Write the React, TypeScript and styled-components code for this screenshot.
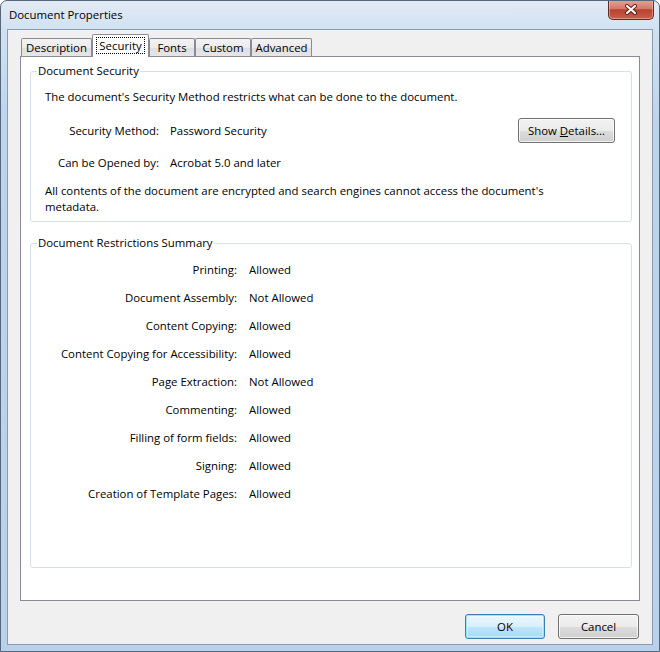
import { Fragment } from "react";
import styled, { createGlobalStyle } from "styled-components";

const GlobalStyle = createGlobalStyle`
  html, body {
    margin: 0;
    padding: 0;
    background: #ffffff;
  }
  body {
    font-family: "Open Sans", "Noto Sans", "Liberation Sans", sans-serif;
    font-size: 11.4px;
    color: #000000;
  }
  * {
    box-sizing: border-box;
  }
`;

const Window = styled.div`
  width: 660px;
  height: 652px;
  display: flex;
  flex-direction: column;
  border: 1px solid #56677b;
  border-radius: 7px 7px 0 0;
  padding: 0 6px 6px;
  overflow: hidden;
  background: linear-gradient(to bottom, #e2ebf5 0px, #d2e1f1 28px, #bdd4ed 120px, #b9d1ea 100%);
`;

const TitleBar = styled.div`
  height: 28px;
  display: flex;
  align-items: center;
  justify-content: space-between;
  padding-left: 2px;
`;

const Title = styled.span`
  line-height: 16px;
`;

const CloseButton = styled.div`
  align-self: flex-start;
  width: 46px;
  height: 20px;
  margin-top: -1px;
  margin-right: -1px;
  display: flex;
  align-items: center;
  justify-content: center;
  border: 1px solid #5e2a22;
  border-top: none;
  border-radius: 0 0 5px 5px;
  background: linear-gradient(to bottom, #e3a59b 0%, #d27a6a 45%, #b9412f 52%, #c9604c 100%);
  box-shadow: inset 0 0 0 1px rgba(255, 210, 200, 0.45);
`;

const Client = styled.div`
  flex: 1;
  display: flex;
  flex-direction: column;
  background: #f0f0f0;
  border: 1px solid #8a9bb0;
  padding: 4px 12px 5px 12px;
`;

const TabStrip = styled.div`
  height: 23px;
  margin-bottom: -1px;
  padding-left: 1px;
  display: flex;
  align-items: flex-end;
  position: relative;
  z-index: 1;
`;

const Tab = styled.div<{ $selected?: boolean; $w: number }>`
  width: ${(p) => p.$w}px;
  height: ${(p) => (p.$selected ? 23 : 18)}px;
  margin-bottom: ${(p) => (p.$selected ? 0 : 1)}px;
  display: flex;
  align-items: center;
  justify-content: center;
  border: 1px solid #898c95;
  border-bottom: none;
  border-radius: 2px 2px 0 0;
  background: ${(p) =>
    p.$selected
      ? "#ffffff"
      : "linear-gradient(to bottom, #f3f3f3 0%, #ebebeb 50%, #dedede 51%, #e6e6e6 100%)"};
  line-height: 16px;
  padding-top: ${(p) => (p.$selected ? 0 : 1)}px;
`;

const FocusLabel = styled.span`
  border: 1px dotted #000000;
  padding: 0 2px;
  line-height: 15px;
  margin-top: -2px;
`;

const Panel = styled.div`
  flex: 1;
  display: flex;
  flex-direction: column;
  gap: 13px;
  background: #ffffff;
  border: 1px solid #898c95;
  padding: 6px 7px 32px 9px;
`;

const Group = styled.fieldset<{ $grow?: boolean }>`
  margin: 0;
  padding: 0 6px;
  min-width: 0;
  border: 1px solid #d5dfe5;
  border-radius: 3px;
  flex: ${(p) => (p.$grow ? "1" : "none")};
`;

const Legend = styled.legend`
  padding: 0 1px;
  line-height: 16px;
`;

const SecurityBody = styled.div`
  display: flex;
  flex-direction: column;
  gap: 12px;
  padding: 10px 8px 6px;
  line-height: 16px;
`;

const InfoRow = styled.div<{ $first?: boolean }>`
  display: grid;
  grid-template-columns: 114px 1fr auto;
  column-gap: 11px;
  align-items: center;
  min-height: 16px;
  margin-top: ${(p) => (p.$first ? 1 : 0)}px;
`;

const InfoLabel = styled.span`
  text-align: right;
  white-space: nowrap;
`;

const Note = styled.p`
  margin: 0;
`;

const RestrictionsBody = styled.div`
  display: grid;
  grid-template-columns: 192px auto;
  column-gap: 12px;
  row-gap: 12px;
  justify-content: start;
  padding: 11px 8px 0;
  line-height: 16px;
`;

const RuleLabel = styled.span`
  text-align: right;
  white-space: nowrap;
`;

const RuleValue = styled.span`
  white-space: nowrap;
`;

const Button = styled.button<{ $default?: boolean; $w: number }>`
  width: ${(p) => p.$w}px;
  height: 25px;
  padding: 0;
  font: inherit;
  color: #000000;
  border: 1px solid ${(p) => (p.$default ? "#3c7fb1" : "#707070")};
  border-radius: 3px;
  background: ${(p) =>
    p.$default
      ? "linear-gradient(to bottom, #eaf6fd 0%, #d9f0fc 50%, #bee6fd 51%, #a7d9f5 100%)"
      : "linear-gradient(to bottom, #f2f2f2 0%, #ebebeb 50%, #dddddd 51%, #cfcfcf 100%)"};
  box-shadow: ${(p) =>
    p.$default
      ? "inset 0 0 0 1px #98e4f9, inset 0 0 0 2px rgba(255,255,255,0.35)"
      : "inset 0 0 0 1px rgba(255,255,255,0.75)"};
  line-height: 16px;
`;

const DetailsButton = styled(Button)`
  margin-right: 2px;
`;

const ButtonRow = styled.div`
  display: flex;
  justify-content: flex-end;
  gap: 13px;
  margin-top: 13px;
  padding-right: 1px;
`;

const tabs = [
  { name: "Description", w: 71 },
  { name: "Security", w: 57, selected: true },
  { name: "Fonts", w: 46 },
  { name: "Custom", w: 56 },
  { name: "Advanced", w: 61 },
];

const restrictions = [
  ["Printing:", "Allowed"],
  ["Document Assembly:", "Not Allowed"],
  ["Content Copying:", "Allowed"],
  ["Content Copying for Accessibility:", "Allowed"],
  ["Page Extraction:", "Not Allowed"],
  ["Commenting:", "Allowed"],
  ["Filling of form fields:", "Allowed"],
  ["Signing:", "Allowed"],
  ["Creation of Template Pages:", "Allowed"],
];

function CloseGlyph() {
  return (
    <svg width="14" height="11" viewBox="0 0 14 11">
      <path d="M3 2 L11 9 M11 2 L3 9" stroke="#5a1c14" strokeWidth="4" strokeLinecap="round" />
      <path d="M3 2 L11 9 M11 2 L3 9" stroke="#ffffff" strokeWidth="2.2" strokeLinecap="round" />
    </svg>
  );
}

export default function App() {
  return (
    <>
      <GlobalStyle />
      <Window>
        <TitleBar>
          <Title>Document Properties</Title>
          <CloseButton>
            <CloseGlyph />
          </CloseButton>
        </TitleBar>
        <Client>
          <TabStrip>
            {tabs.map((t) => (
              <Tab key={t.name} $w={t.w} $selected={t.selected}>
                {t.selected ? <FocusLabel>{t.name}</FocusLabel> : t.name}
              </Tab>
            ))}
          </TabStrip>
          <Panel>
            <Group>
              <Legend>Document Security</Legend>
              <SecurityBody>
                <span>The document's Security Method restricts what can be done to the document.</span>
                <InfoRow $first>
                  <InfoLabel>Security Method:</InfoLabel>
                  <span>Password Security</span>
                  <DetailsButton $w={97}>
                    Show <u>D</u>etails...
                  </DetailsButton>
                </InfoRow>
                <InfoRow>
                  <InfoLabel>Can be Opened by:</InfoLabel>
                  <span>Acrobat 5.0 and later</span>
                </InfoRow>
                <Note>
                  All contents of the document are encrypted and search engines cannot access the document's
                  <br />
                  metadata.
                </Note>
              </SecurityBody>
            </Group>
            <Group $grow>
              <Legend>Document Restrictions Summary</Legend>
              <RestrictionsBody>
                {restrictions.map(([label, value]) => (
                  <Fragment key={label}>
                    <RuleLabel>{label}</RuleLabel>
                    <RuleValue>{value}</RuleValue>
                  </Fragment>
                ))}
              </RestrictionsBody>
            </Group>
          </Panel>
          <ButtonRow>
            <Button $default $w={80}>
              OK
            </Button>
            <Button $w={81}>Cancel</Button>
          </ButtonRow>
        </Client>
      </Window>
    </>
  );
}
